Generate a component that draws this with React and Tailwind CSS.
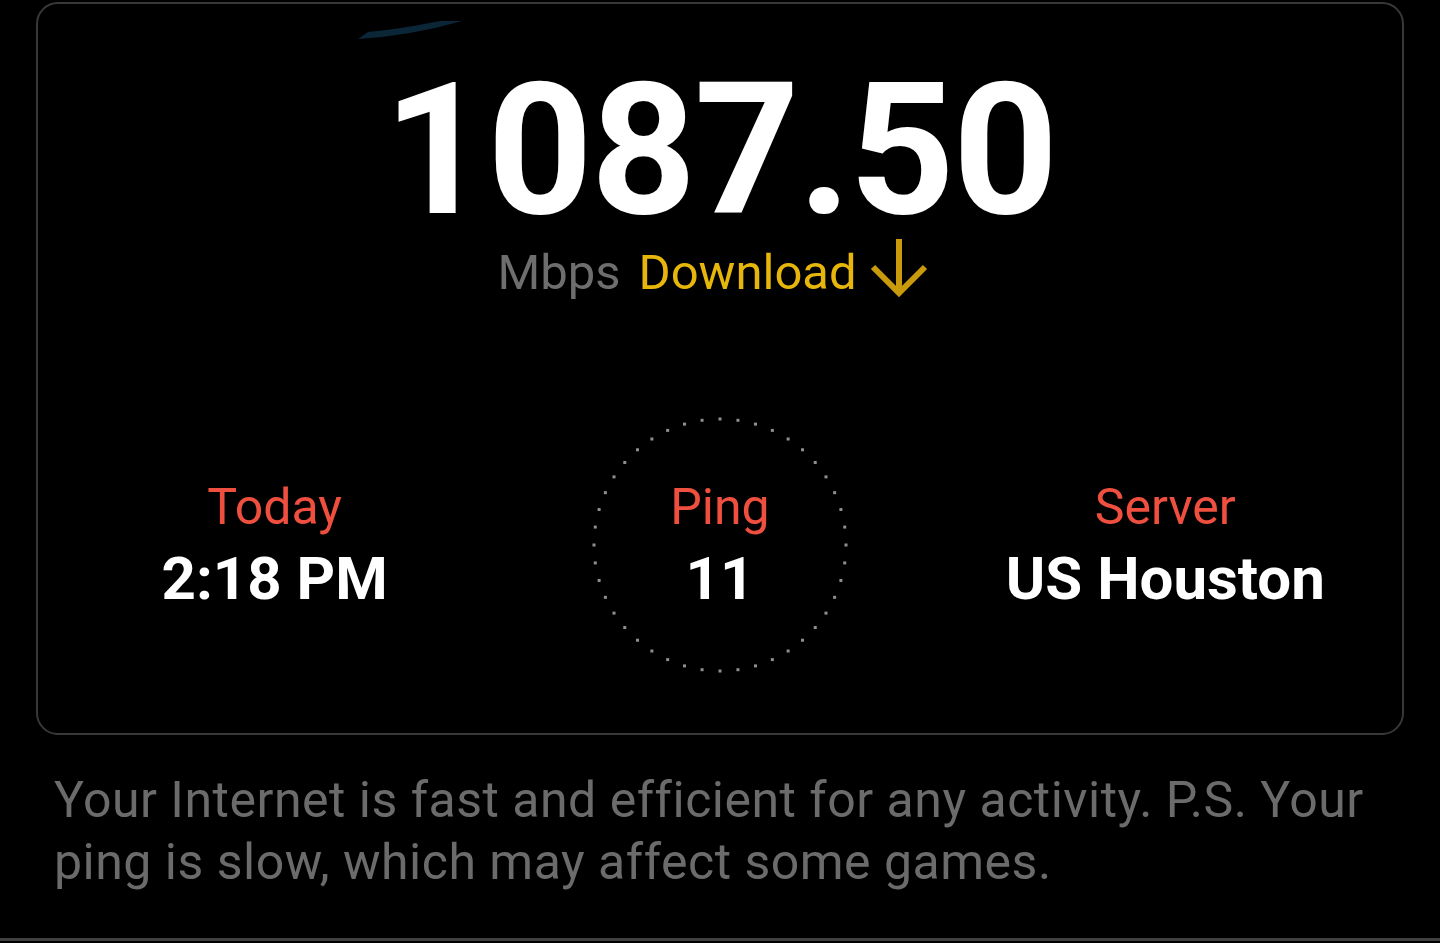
import React from "react";

function DottedCircle() {
  const dots = [];
  const n = 44;
  for (let i = 0; i < n; i++) {
    const a = (i / n) * Math.PI * 2;
    const x = 128 + 126 * Math.cos(a);
    const y = 128 + 126 * Math.sin(a);
    dots.push(<rect key={i} x={x - 1.5} y={y - 1.5} width="3" height="3" fill="#8f8f8f" />);
  }
  return (
    <svg className="absolute inset-0" width="256" height="256" viewBox="0 0 256 256">
      {dots}
    </svg>
  );
}

function Stat({ label, value }) {
  return (
    <div className="flex flex-col items-center">
      <div className="text-[50px] leading-none text-[#ef4f3f]">{label}</div>
      <div className="mt-[17px] text-[60px] leading-none font-bold text-white">{value}</div>
    </div>
  );
}

export default function App() {
  return (
    <div
      className="h-[943px] w-[1440px] bg-black flex flex-col overflow-hidden"
      style={{ fontFamily: "Roboto, 'Noto Sans', sans-serif" }}
    >
      <div className="relative mx-[36px] mt-[2px] border-2 border-[#383838] rounded-[22px] pt-[54px] pb-[60px]">
        <svg className="absolute left-[320px] top-[15px]" width="110" height="24" viewBox="0 0 110 24">
          <path d="M0 20 Q52 17 104 2 L82 2 Q42 10 10 13 Z" fill="#0b2636" />
        </svg>
        <div className="text-center text-white font-bold text-[184px] leading-none tracking-[-2px]">1087.50</div>
        <div className="mt-[6px] mr-[14px] flex items-center justify-center">
          <span className="text-[49px] leading-none text-[#6e6e6e]">Mbps</span>
          <span className="ml-[18px] text-[49px] leading-none text-[#e6b60b]">Download</span>
          <svg className="ml-[12px] -mt-[12px]" width="60" height="60" viewBox="0 0 60 60" fill="none" stroke="#c99a0b" strokeWidth="6" strokeLinecap="butt" strokeLinejoin="miter">
            <path d="M30 2 V54" />
            <path d="M4 30 L30 56 L56 30" />
          </svg>
        </div>
        <div className="mt-[120px] grid grid-cols-3 items-center px-[14px]">
          <Stat label="Today" value="2:18 PM" />
          <div className="relative mx-auto w-[256px] h-[256px] flex items-center justify-center">
            <DottedCircle />
            <Stat label="Ping" value="11" />
          </div>
          <Stat label="Server" value="US Houston" />
        </div>
      </div>
      <div className="mt-[34px] px-[54px] text-[50px] leading-[62px] text-[#6b6b6b] tracking-[0.5px]">
        Your Internet is fast and efficient for any activity. P.S. Your
        <br />
        ping is slow, which may affect some games.
      </div>
      <div className="mt-auto mb-[2px] h-[3px] bg-[#404040]" />
    </div>
  );
}
